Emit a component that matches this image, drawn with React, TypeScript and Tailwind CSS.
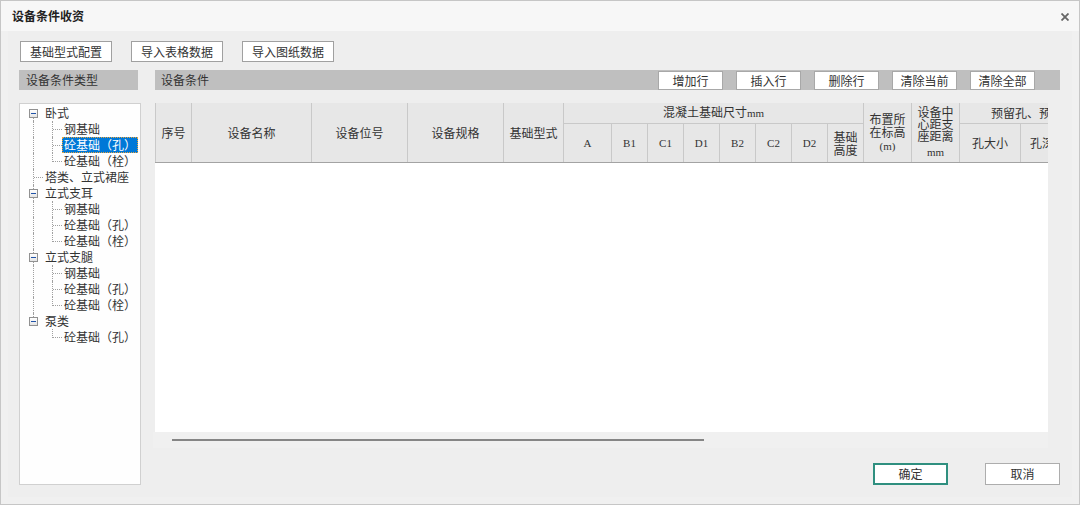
import React from 'react';

type TreeRow = {
  label: string;
  level: 0 | 1;
  box?: boolean;
  lastChild?: boolean;
  selected?: boolean;
};

const TREE: TreeRow[] = [
  { label: '卧式', level: 0, box: true },
  { label: '钢基础', level: 1 },
  { label: '砼基础（孔）', level: 1, selected: true },
  { label: '砼基础（栓）', level: 1, lastChild: true },
  { label: '塔类、立式裙座', level: 0 },
  { label: '立式支耳', level: 0, box: true },
  { label: '钢基础', level: 1 },
  { label: '砼基础（孔）', level: 1 },
  { label: '砼基础（栓）', level: 1, lastChild: true },
  { label: '立式支腿', level: 0, box: true },
  { label: '钢基础', level: 1 },
  { label: '砼基础（孔）', level: 1 },
  { label: '砼基础（栓）', level: 1, lastChild: true },
  { label: '泵类', level: 0, box: true },
  { label: '砼基础（孔）', level: 1, lastChild: true },
];

const LAST_ROOT = 13;

function MinusBox() {
  return (
    <span className="absolute left-[9px] top-[4px] flex h-[9px] w-[9px] items-center justify-center border border-[#919191] bg-gradient-to-b from-white to-[#e4e4e4]">
      <span className="h-[1px] w-[5px] bg-[#2153a8]" />
    </span>
  );
}

function TreeLine({ index, row }: { index: number; row: TreeRow }) {
  const rootLine =
    index === 0 ? (
      <span className="absolute left-[13px] top-[8px] h-[8px] border-l border-dotted border-[#a0a0a0]" />
    ) : index < LAST_ROOT ? (
      <span className="absolute left-[13px] top-0 h-[16px] border-l border-dotted border-[#a0a0a0]" />
    ) : index === LAST_ROOT ? (
      <span className="absolute left-[13px] top-0 h-[8px] border-l border-dotted border-[#a0a0a0]" />
    ) : null;

  return (
    <>
      {rootLine}
      {row.level === 0 && !row.box && (
        <span className="absolute left-[14px] top-[8px] w-[9px] border-t border-dotted border-[#a0a0a0]" />
      )}
      {row.level === 1 && (
        <>
          <span
            className={
              row.lastChild
                ? 'absolute left-[32px] top-0 h-[9px] border-l border-dotted border-[#a0a0a0]'
                : 'absolute left-[32px] top-0 h-[16px] border-l border-dotted border-[#a0a0a0]'
            }
          />
          <span className="absolute left-[33px] top-[8px] w-[9px] border-t border-dotted border-[#a0a0a0]" />
        </>
      )}
      {row.box && <MinusBox />}
    </>
  );
}

function Tree() {
  return (
    <div className="flex-1 border border-[#d0d0d0] bg-[#fefefe] pt-[1px]">
      {TREE.map((row, i) => (
        <div
          key={i}
          className={
            row.level === 0
              ? 'relative flex h-[16px] items-center pl-[23px]'
              : 'relative flex h-[16px] items-center pl-[42px]'
          }
        >
          <TreeLine index={i} row={row} />
          <span
            className={
              row.selected
                ? 'flex h-[16px] items-center border border-dotted border-[#e8a33c] bg-[#0078d7] px-[1px] text-white'
                : 'flex h-[16px] items-center px-[2px] text-[#333]'
            }
          >
            {row.label}
          </span>
        </div>
      ))}
    </div>
  );
}

const th = 'border-r border-b border-[#c9c9c9] bg-[#e7e7e7] p-0 text-center align-middle font-normal text-[#333]';
const thBottom = 'border-r border-b border-[#c9c9c9] border-b-[#a3a3a3] bg-[#e7e7e7] p-0 text-center align-middle font-normal text-[#333]';
const latin = "font-['Liberation_Serif',serif] text-[11px]";

function GridHeader() {
  return (
    <table className="w-[965px] table-fixed border-collapse text-[12px] leading-[13px]">
      <colgroup>
        <col className="w-[36px]" />
        <col className="w-[120px]" />
        <col className="w-[96px]" />
        <col className="w-[96px]" />
        <col className="w-[60px]" />
        <col className="w-[48px]" />
        <col className="w-[36px]" />
        <col className="w-[36px]" />
        <col className="w-[36px]" />
        <col className="w-[36px]" />
        <col className="w-[36px]" />
        <col className="w-[36px]" />
        <col className="w-[36px]" />
        <col className="w-[48px]" />
        <col className="w-[48px]" />
        <col className="w-[61px]" />
        <col className="w-[60px]" />
        <col className="w-[40px]" />
      </colgroup>
      <thead>
        <tr className="h-[20px]">
          <th rowSpan={2} className={thBottom + ' border-l border-l-[#c9c9c9]'}>序号</th>
          <th rowSpan={2} className={thBottom}>设备名称</th>
          <th rowSpan={2} className={thBottom}>设备位号</th>
          <th rowSpan={2} className={thBottom}>设备规格</th>
          <th rowSpan={2} className={thBottom}>基础型式</th>
          <th colSpan={8} className={th}>
            混凝土基础尺寸<span className={latin}>mm</span>
          </th>
          <th rowSpan={2} className={thBottom}>
            布置所
            <br />
            在标高
            <br />
            <span className={latin}>(m)</span>
          </th>
          <th rowSpan={2} className={thBottom + ' leading-[12px]'}>
            设备中
            <br />
            心距支
            <br />
            座距离
            <br />
            <span className={latin + ' inline-block pt-[4px]'}>mm</span>
          </th>
          <th colSpan={3} className={th + ' text-left'}>
            <span className="whitespace-nowrap pl-[31px]">预留孔、预埋螺栓</span>
          </th>
        </tr>
        <tr className="h-[39px]">
          <th className={thBottom}><span className={latin}>A</span></th>
          <th className={thBottom}><span className={latin}>B1</span></th>
          <th className={thBottom}><span className={latin}>C1</span></th>
          <th className={thBottom}><span className={latin}>D1</span></th>
          <th className={thBottom}><span className={latin}>B2</span></th>
          <th className={thBottom}><span className={latin}>C2</span></th>
          <th className={thBottom}><span className={latin}>D2</span></th>
          <th className={thBottom}>
            基础
            <br />
            高度
          </th>
          <th className={thBottom}>孔大小</th>
          <th className={thBottom + ' whitespace-nowrap text-left pl-[9px]'}>孔深度</th>
          <th className={thBottom}>规格</th>
        </tr>
      </thead>
    </table>
  );
}

const topBtn = 'flex h-[21px] w-[92px] items-center justify-center border border-[#a0a0a0] bg-white text-[#333]';
const barBtn = 'flex h-[19px] w-[65px] items-center justify-center border border-[#a8a8a8] bg-white text-[#333]';

export default function App() {
  return (
    <div className="flex h-[505px] w-[1080px] flex-col border border-[#c6c6c6] bg-[#f0f0f0] font-['Noto_Sans_CJK_SC',sans-serif] text-[12px] leading-none text-[#333]">
      <div className="flex h-[30px] shrink-0 items-center justify-between bg-[#f7f7f7] pl-[11px] pr-[10px]">
        <span className="font-bold text-[#222]">设备条件收资</span>
        <svg width="8" height="8" viewBox="0 0 8 8" className="mt-[1px]">
          <path d="M0.5 0.5 L7.5 7.5 M7.5 0.5 L0.5 7.5" stroke="#666" strokeWidth="1.8" />
        </svg>
      </div>

      <div className="flex flex-1 flex-col px-[7px] pb-[7px]">
        <div className="flex flex-1 flex-col bg-[#eeeeee] pb-[12px] pl-[11px] pr-[12px] pt-[10px]">
          <div className="ml-[1px] flex gap-[19px]">
            <button className={topBtn}>基础型式配置</button>
            <button className={topBtn}>导入表格数据</button>
            <button className={topBtn}>导入图纸数据</button>
          </div>

          <div className="mt-[8px] flex flex-1 gap-[14px]">
            <div className="flex w-[122px] flex-col">
              <div className="flex h-[20px] w-[119px] items-center bg-[#bfbfbf] pl-[7px] text-[#333]">设备条件类型</div>
              <div className="mt-[13px] flex flex-1 flex-col">
                <Tree />
              </div>
            </div>

            <div className="flex flex-1 flex-col">
              <div className="flex h-[20px] items-start justify-between bg-[#bfbfbf] pl-[6px] pr-[25px] pt-[1px]">
                <span className="mt-[3px]">设备条件</span>
                <div className="flex gap-[13px]">
                  <button className={barBtn}>增加行</button>
                  <button className={barBtn}>插入行</button>
                  <button className={barBtn}>删除行</button>
                  <button className={barBtn}>清除当前</button>
                  <button className={barBtn}>清除全部</button>
                </div>
              </div>

              <div className="mt-[13px] h-[329px] w-[893px] overflow-hidden bg-white">
                <GridHeader />
              </div>
              <div className="-ml-[2px] h-[16px] w-[895px] bg-[#f0f0f0] pt-[7px]">
                <div className="ml-[19px] h-[2px] w-[532px] bg-[#858585]" />
              </div>

              <div className="mt-[15px] flex justify-end gap-[37px]">
                <button className="flex h-[22px] w-[75px] items-center justify-center border-2 border-[#2f8f7f] bg-white text-[#333]">
                  确定
                </button>
                <button className="flex h-[22px] w-[75px] items-center justify-center border border-[#adadad] bg-white text-[#333]">
                  取消
                </button>
              </div>
            </div>
          </div>
        </div>
      </div>
    </div>
  );
}
